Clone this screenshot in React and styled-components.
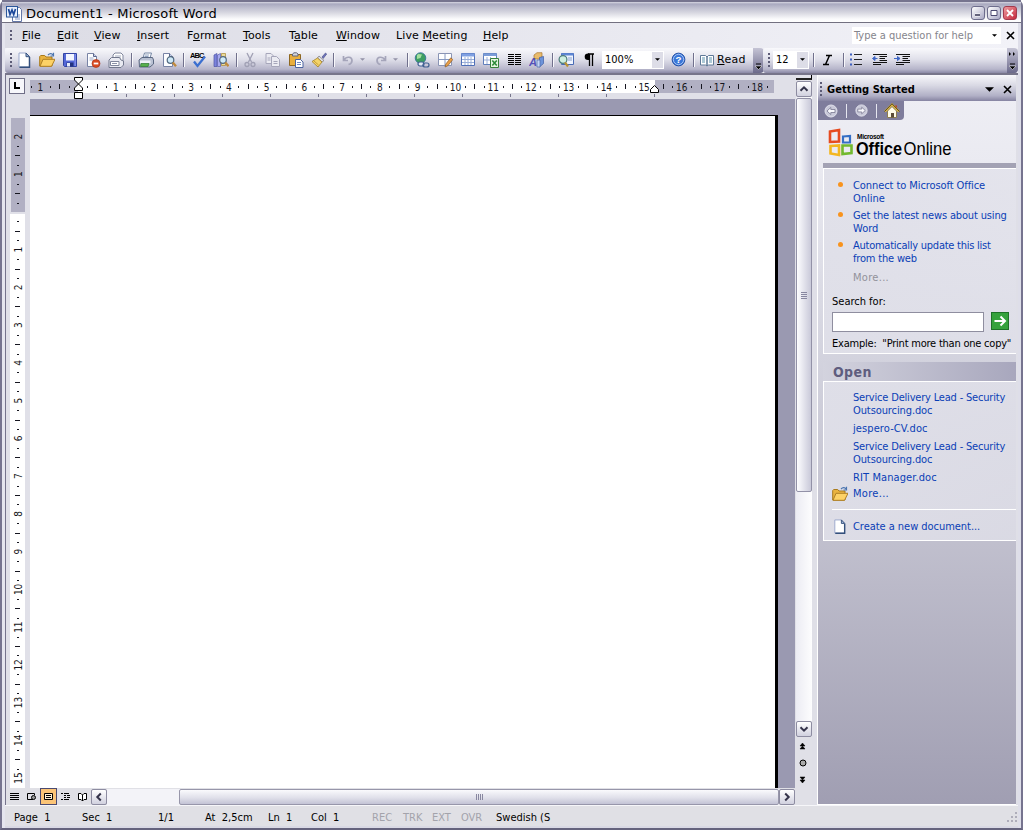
import React from "react";
import styled, { createGlobalStyle } from "styled-components";

const Global = createGlobalStyle`
    * {
        box-sizing: border-box;
    }
    body {
        margin: 0;
        overflow: hidden;
        font-family: "DejaVu Sans Condensed", "DejaVu Sans", sans-serif;
        font-stretch: condensed;
        font-size: 11px;
        color: #000;
    }
    svg {
        display: block;
        flex-shrink: 0;
    }
    u {
        text-underline-offset: 1px;
    }
`;

const Window = styled.div`
    width: 1023px;
    height: 830px;
    display: flex;
    flex-direction: column;
    background: #dfdfe7;
    border-left: 2px solid #76748f;
    border-right: 2px solid #76748f;
    border-bottom: 2px solid #65637d;
    border-radius: 6px 6px 0 0;
`;

const TitleBar = styled.div`
    height: 23px;
    flex-shrink: 0;
    display: flex;
    align-items: center;
    padding: 3px 4px 0 4px;
    border-top: 2px solid #76748e;
    border-bottom: 1px solid #727080;
    background: linear-gradient(#d8d8e3 0, #a9a9bf 2px, #c0c0d0 6px, #d9d9e2 11px, #fafafc 17px, #fff 20px);
`;

const Title = styled.span`
    flex: 1;
    margin-left: 4px;
    padding-bottom: 1px;
    font-family: "DejaVu Sans", sans-serif;
    font-stretch: normal;
    font-size: 13px;
    line-height: 15px;
    letter-spacing: 0.22px;
    white-space: nowrap;
`;

const CaptionButton = styled.div`
    width: 14px;
    height: 14px;
    margin: 0 0 2px 2px;
    display: flex;
    align-items: center;
    justify-content: center;
    border: 1px solid ${(p) => (p.$close ? "#a33a4d" : "#6d6c8c")};
    border-radius: 3px;
    background: ${(p) =>
        p.$close
            ? "linear-gradient(135deg, #ef9da0, #c5283b)"
            : "linear-gradient(135deg, #fff, #a9a8c4)"};
`;

const Frame = styled.div`
    flex: 1;
    min-height: 0;
    display: flex;
    flex-direction: column;
    border-left: 3px solid #e5e5ee;
    border-right: 3px solid #dedee9;
`;

const MenuBar = styled.div`
    height: 25px;
    flex-shrink: 0;
    display: flex;
    align-items: center;
    padding: 0 3px 0 5px;
    background: linear-gradient(90deg, #dcdce5, #f2f2f8);
`;

const Grip = styled.div`
    width: 2px;
    height: ${(p) => p.$h || 12}px;
    flex-shrink: 0;
    margin-right: ${(p) => p.$r || 0}px;
    background: repeating-linear-gradient(#5c5b76 0 2px, transparent 2px 4px);
`;

const MenuItem = styled.span`
    width: ${(p) => p.$w}px;
    font-family: "DejaVu Sans", sans-serif;
    font-stretch: normal;
    font-size: 11px;
    letter-spacing: 0.1px;
    white-space: nowrap;
`;

const Question = styled.div`
    width: 149px;
    height: 17px;
    margin: 0 5px 1px auto;
    display: flex;
    align-items: center;
    justify-content: space-between;
    padding: 0 4px 0 2px;
    background: #fff;
    color: #85858c;
    white-space: nowrap;
`;

const ToolBars = styled.div`
    height: 25px;
    flex-shrink: 0;
    display: flex;
    background: #f0f0f6;
`;

const ToolBar = styled.div`
    flex: ${(p) => (p.$grow ? 1 : "none")};
    width: ${(p) => p.$w}px;
    margin-left: ${(p) => p.$l || 0}px;
    display: flex;
    align-items: center;
    gap: 7px;
    padding: 0 0 2px 5px;
    border-radius: 3px 4px 4px 3px;
    background: linear-gradient(#f9f9fc, #e0e0ea 45%, #b6b5ca 85%, #8a88a5);
`;

const Sep = styled.div`
    width: 2px;
    height: 14px;
    flex-shrink: 0;
    margin: 0 ${(p) => p.$r ?? -2}px 0 ${(p) => p.$l || 0}px;
    border-left: 1px solid #70708c;
    border-right: 1px solid #f8f8fb;
`;

const SplitIcon = styled.div`
    flex-shrink: 0;
    display: flex;
    align-items: center;
    gap: 4px;
    margin-right: 1px;
`;

const Combo = styled.div`
    width: ${(p) => p.$w}px;
    height: 18px;
    margin-left: ${(p) => p.$l || 0}px;
    flex-shrink: 0;
    display: flex;
    justify-content: space-between;
    align-items: center;
    padding-left: 3px;
    background: #fff;
`;

const ComboButton = styled.span`
    width: 11px;
    height: 16px;
    margin-right: 1px;
    display: flex;
    align-items: center;
    justify-content: center;
    background: #dddde7;
`;

const ReadLabel = styled.span`
    margin-left: -5px;
    font-family: "DejaVu Sans", sans-serif;
    font-stretch: normal;
    font-size: 11px;
    letter-spacing: 0.3px;
`;

const OverflowCap = styled.div`
    width: 11px;
    height: 25px;
    flex-shrink: 0;
    margin: 0 0 -2px auto;
    display: flex;
    flex-direction: column;
    align-items: center;
    justify-content: space-between;
    padding: 4px 0 3px;
    border-radius: 0 4px 4px 0;
    background: linear-gradient(#c5c4d5, #6c6a8b);
`;

const Workspace = styled.div`
    flex: 1;
    min-height: 0;
    display: flex;
    border-top: 2px solid #77758a;
`;

const DocColumn = styled.div`
    width: 790px;
    flex-shrink: 0;
    display: flex;
    flex-direction: column;
    border-left: 1px solid #75738c;
`;

const RulerRow = styled.div`
    height: 24px;
    flex-shrink: 0;
    display: flex;
    background: #e0e0e8;
`;

const TabButton = styled.div`
    width: 16px;
    height: 16px;
    flex-shrink: 0;
    margin: 3px 5px 0 3px;
    display: flex;
    align-items: center;
    justify-content: center;
    border: 1px solid #6f6e86;
    background: #f7f7fb;
`;

const DocRow = styled.div`
    flex: 1;
    min-height: 0;
    display: flex;
    background: #e0e0e8;
`;

const VerticalRuler = styled.div`
    width: 24px;
    flex-shrink: 0;
`;

const Canvas = styled.div`
    flex: 1;
    padding-top: 16px;
    background: #9a99b1;
`;

const Page = styled.div`
    width: 748px;
    height: 100%;
    background: #fff;
    border-top: 1px solid #000;
    border-right: 3px solid #000;
`;

const BottomRow = styled.div`
    height: 17px;
    flex-shrink: 0;
    display: flex;
    align-items: center;
    background: #e0e0e6;
`;

const ViewButton = styled.div`
    width: 17px;
    height: 17px;
    display: flex;
    align-items: center;
    justify-content: center;
    border: 1px solid ${(p) => (p.$active ? "#4b4a70" : "transparent")};
    background: ${(p) => (p.$active ? "#fbc477" : "none")};
`;

const ScrollButton = styled.div`
    width: 16px;
    height: 16px;
    flex-shrink: 0;
    display: flex;
    align-items: center;
    justify-content: center;
    border: 1px solid #8d8ca1;
    border-radius: 2px;
    background: linear-gradient(#fff, #d1d1df);
`;

const HTrack = styled.div`
    flex: 1;
    display: flex;
    height: 16px;
    padding-left: 72px;
    background: #f3f3f8;
`;

const HThumb = styled.div`
    flex: 1;
    display: flex;
    align-items: center;
    justify-content: center;
    border: 1px solid #9796aa;
    border-radius: 2px;
    background: linear-gradient(#fafafd, #e0e0ea 55%, #c3c3d5);
`;

const VScroll = styled.div`
    width: 17px;
    flex-shrink: 0;
    display: flex;
    flex-direction: column;
    align-items: flex-end;
    background: #e0e0e7;
`;

const SplitBox = styled.div`
    width: 16px;
    height: 5px;
    margin-bottom: 1px;
    flex-shrink: 0;
    background: #e4e4ec;
    border-right: 1px solid #000;
    border-bottom: 2px solid #222;
`;

const VTrack = styled.div`
    width: 16px;
    height: 624px;
    padding-top: 1px;
    background: linear-gradient(90deg, #ececf3, #fdfdfe);
`;

const VThumb = styled.div`
    height: 394px;
    display: flex;
    align-items: center;
    justify-content: center;
    border: 1px solid #9291a7;
    border-radius: 2px;
    background: linear-gradient(90deg, #fdfdff, #e3e3ec 50%, #c9c9d9);
`;

const BrowseButtons = styled.div`
    width: 13px;
    flex: 1;
    display: flex;
    flex-direction: column;
    align-items: center;
    gap: 8px;
    padding-top: 5px;
    margin-right: 3px;
`;

const Pane = styled.div`
    flex: 1;
    margin: 0 2px 0 5px;
    display: flex;
    flex-direction: column;
    border-left: 1px solid #fff;
    border-bottom: 1px solid #fff;
    background: linear-gradient(#efeff5 0, #eaeaf1 90px, #d4d4df 270px, #c1c0ce 460px, #a09eb2 730px);
`;

const PaneHeader = styled.div`
    height: 26px;
    flex-shrink: 0;
    display: flex;
    align-items: center;
    padding: 2px 4px 0 2px;
    gap: 5px;
    font-weight: bold;
    background: linear-gradient(#f8f8fb, #d9d9e4 40%, #b1b0c6 80%, #8583a1);
`;

const PaneTitle = styled.span`
    flex: 1;
    letter-spacing: 0.05px;
    white-space: nowrap;
`;

const PaneButtons = styled.div`
    display: flex;
    align-items: center;
    gap: 9px;
`;

const PaneNav = styled.div`
    width: 86px;
    height: 19px;
    flex-shrink: 0;
    display: flex;
    align-items: center;
    gap: 7px;
    padding-left: 5px;
    border-radius: 0 0 4px 0;
    background: #7f7d9c;
`;

const NavSep = styled.div`
    width: 1px;
    height: 14px;
    background: #e6e6f0;
`;

const Brand = styled.div`
    height: 48px;
    flex-shrink: 0;
    margin-left: 5px;
    padding: 8px 0 0 4px;
    border-bottom: 5px solid #a3a2b4;
`;

const Section = styled.div`
    height: ${(p) => p.$h}px;
    flex-shrink: 0;
    margin-left: 5px;
    display: flex;
    flex-direction: column;
    padding: ${(p) => p.$pad || "0"};
    border: 1px solid #fff;
    border-right: none;
    background: linear-gradient(90deg, rgba(224, 224, 233, 0.9), rgba(226, 226, 235, 0.75));
`;

const SectionHead = styled.div`
    height: 19px;
    flex-shrink: 0;
    margin: 8px 0 0 5px;
    padding-left: 10px;
    font-weight: bold;
    font-size: 14px;
    line-height: 21px;
    letter-spacing: 0.4px;
    color: #5f5d7e;
    background: linear-gradient(90deg, #d3d3de, #a8a7bd);
`;

const Item = styled.div`
    height: ${(p) => p.$h || 30}px;
    flex-shrink: 0;
    display: flex;
    padding-left: ${(p) => (p.$bullet ? 13 : 8)}px;
`;

const Bullet = styled.span`
    width: 5px;
    height: 5px;
    margin: 3px 10px 0 1px;
    border-radius: 50%;
    background: #f8931d;
`;

const IconSlot = styled.span`
    width: 21px;
    flex-shrink: 0;
    margin-top: -1px;
`;

const Link = styled.span`
    color: ${(p) => (p.$muted ? "#92929b" : "#0a3eb6")};
    line-height: 13px;
    white-space: nowrap;
`;

const Line = styled.span`
    display: block;
    letter-spacing: ${(p) => p.$ls || 0}px;
`;

const PlainText = styled.div`
    padding-left: 8px;
    line-height: 13px;
    letter-spacing: ${(p) => p.$ls || 0}px;
    white-space: pre;
`;

const SearchRow = styled.div`
    height: 20px;
    display: flex;
    align-items: stretch;
    gap: 7px;
    margin: 4px 0 5px 8px;
`;

const SearchInput = styled.div`
    width: 152px;
    border: 1px solid #8f8e9f;
    background: #fff;
`;

const Divider = styled.div`
    height: 1px;
    flex-shrink: 0;
    margin: 9px 0 10px 8px;
    background: #fff;
`;

const StatusBar = styled.div`
    height: 23px;
    flex-shrink: 0;
    display: flex;
    align-items: center;
    padding: 2px 0 0 9px;
    border-top: 1px solid #f6f6f9;
    border-bottom: 2px solid #d9d9e4;
    background: #e0e0e5;
`;

const StatusItem = styled.span`
    width: ${(p) => p.$w}px;
    white-space: pre;
    color: ${(p) => (p.$off ? "#a3a3ab" : "#000")};
`;

const SizeGrip = styled.svg`
    margin-left: auto;
`;

const Arrow = ({ color = "#000", size = 5 }) => (
    <svg width={size} height={Math.ceil(size / 2)} viewBox="0 0 6 3">
        <path d="M0 0h6L3 3z" fill={color} />
    </svg>
);

const Cross = () => (
    <svg width="9" height="9" viewBox="0 0 9 9">
        <path d="M1 1l7 7M8 1L1 8" stroke="#000" strokeWidth="1.6" />
    </svg>
);

const Chevron = ({ turn = 0 }) => (
    <svg width="10" height="10" viewBox="0 0 10 10">
        <path
            d="M1.5 6.8L5 3.3l3.5 3.5"
            fill="none"
            stroke="#34334a"
            strokeWidth="2"
            transform={`rotate(${turn} 5 5)`}
        />
    </svg>
);

const MoreMark = () => (
    <svg width="7" height="7">
        <path d="M1 1h5" stroke="#000" />
        <path d="M0 3h7L3.500 6.500z" stroke="#fff" strokeWidth=".5" />
    </svg>
);

const paper = (x, y, w = 9, h = 12) => (
    <g>
        <path
            d={`M${x} ${y}h${w - 3}l3 3v${h - 3}h${-w}z`}
            fill="#fdfdff"
            stroke="#7883a5"
        />
        <path d={`M${x + w - 3} ${y}v3h3`} fill="#c7d0e8" stroke="#59658c" />
    </g>
);

const lens = (x, y) => (
    <g>
        <circle cx={x} cy={y} r="3.300" fill="#cfeaf8" stroke="#51687f" strokeWidth="1.200" />
        <path d={`M${x + 2.3} ${y + 2.6}l3.200 3.600`} stroke="#c08a3c" strokeWidth="2.300" />
    </g>
);

const icons = {
    word: (
        <g>
            <path d="M6.500 1.500h7l2 2v12h-9z" fill="#fff" stroke="#6477a8" />
            <path d="M9 9h5M9 11h5M9 13h5" stroke="#8596c4" />
            <rect x=".5" y=".5" width="11" height="10.500" fill="#e8effc" stroke="#2b579a" />
            <path d="M2.500 3l1.500 5.500L6 4l1.700 4.500L9.500 3" fill="none" stroke="#1c489a" strokeWidth="1.700" />
        </g>
    ),
    doc: (
        <g>
            <path d="M3 1h7l3.500 3.500V15H3z" fill="#fff" stroke="#9aa8cc" />
            <path d="M3.500 15.200h10V5" fill="none" stroke="#34507c" strokeWidth="1.500" />
            <path d="M10 1v3.700h3.500z" fill="#a7bce0" stroke="#34507c" />
        </g>
    ),
    folder: (
        <g>
            <path d="M.7 14V4.500l1-1h4l1.300 1.500h6V14z" fill="#e9b33f" stroke="#a97a1c" />
            <path d="M1 14.300l3-7h12l-3.500 7z" fill="#fdd266" stroke="#ae7f24" />
            <path d="M9 3c2-2.300 4-1.500 5 0M14.500.800V4H11.500" fill="none" stroke="#4b75b0" strokeWidth="1.200" />
        </g>
    ),
    save: (
        <g>
            <path d="M1.500 1.500h13v13h-12l-1-1z" fill="#5468d8" stroke="#3244a4" />
            <path d="M4 2h8v6.500H4z" fill="#f2f5ff" />
            <path d="M4.500 10.500h7V14.500h-7z" fill="#23337e" />
            <path d="M5 11h3v3.500H5z" fill="#e6ecfa" />
            <path d="M13.200 2v12" stroke="#8f9cf0" />
        </g>
    ),
    permission: (
        <g>
            {paper(2.5, 1.5, 9, 13)}
            <path d="M4.500 6h4M4.500 8h4" stroke="#9eabc9" />
            <circle cx="11" cy="11.500" r="4" fill="#d94a22" stroke="#a52d11" strokeWidth=".6" />
            <path d="M8.700 11.500h4.600" stroke="#fff" strokeWidth="1.800" />
        </g>
    ),
    mail: (
        <g>
            <path d="M5 6V3l2-2h6l2 2v7" fill="#fff" stroke="#80869c" />
            <path d="M7 4h6M7 6h6" stroke="#a5acc0" />
            <path d="M1 8l2.500-2.500h8L13 8l2.500 1v4L13 15.500H1z" fill="#e9eaf2" stroke="#72788d" />
            <path d="M2.500 9.500h8.500v4H2.500z" fill="#fff" stroke="#80869c" />
            <path d="M4 11.500h5" stroke="#8b92a8" />
        </g>
    ),
    print: (
        <g>
            <path d="M5 6l1.500-5h7L12 6" fill="#fff" stroke="#7486a4" />
            <path d="M1 8l3-2.500h10.500L15.500 8v4L12 15H1.500z" fill="#b9c1d3" stroke="#5a6781" />
            <path d="M2 8.500h10.500v3H2z" fill="#eef1f7" />
            <path d="M3 11.500h8l-1 3H2.500z" fill="#57b04b" stroke="#2f7a30" strokeWidth=".7" />
            <path d="M7 3h4M6.500 4.500h4" stroke="#90a2c0" />
        </g>
    ),
    preview: (
        <g>
            {paper(2.5, 1.5, 9, 13)}
            {lens(9.5, 8)}
        </g>
    ),
    spell: (
        <g>
            <text x="0" y="5.500" fontSize="7.500" fontWeight="bold" fontFamily="Liberation Sans" textLength="14.500">ABC</text>
            <path d="M4 9.500l3.500 4.500L15 4.500" fill="none" stroke="#3b6fd0" strokeWidth="2.300" />
        </g>
    ),
    research: (
        <g>
            <path d="M1 3l3-1.500v13H1z" fill="#7b83dc" stroke="#4d53a5" strokeWidth=".7" />
            <path d="M4.500 3l3-1.500v13h-3z" fill="#a8aaf0" stroke="#5a5eae" strokeWidth=".7" />
            <path d="M8.500 1.500h4v12h-4z" fill="#eadb9c" stroke="#a9862f" strokeWidth=".7" />
            {lens(10, 8)}
        </g>
    ),
    cut: (
        <g fill="none" stroke="#a0a0b4" strokeWidth="1.300">
            <path d="M5 1l4.500 9M11 1L6.500 10" />
            <circle cx="5" cy="12.500" r="2" />
            <circle cx="11" cy="12.500" r="2" />
        </g>
    ),
    copy: (
        <g fill="#ebebf2" stroke="#a6a6ba">
            <path d="M1 1.500h5l3 3v7H1z" />
            <path d="M6.500 4.500h5l3 3v7h-8z" />
            <path d="M8.500 9.500h4M8.500 11.500h4M2.500 6h3M2.500 8h3" />
        </g>
    ),
    paste: (
        <g>
            <path d="M1.500 2.500h11v11h-11z" fill="#e9ae3c" stroke="#8e6720" />
            <path d="M4.500 4V2L6 .800h2.500L10 2v2z" fill="#d5d7df" stroke="#636579" />
            <path d="M7.500 7.500h5l2.500 2.500v5.500H7.500z" fill="#fff" stroke="#4c64a0" />
            <path d="M9 10.500h4M9 12.500h4" stroke="#718bc5" />
        </g>
    ),
    brush: (
        <g>
            <path d="M11 5l3.500-4 1.200 1-3.500 4.500z" fill="#6c72ba" stroke="#454a83" strokeWidth=".6" />
            <path d="M8 4l5 4.500-2 1.500L6.500 6z" fill="#dcdde6" stroke="#666" strokeWidth=".6" />
            <path d="M6.500 6L11 10l-4 5L1 9.500z" fill="#f4d46a" stroke="#a27f24" strokeWidth=".8" />
            <path d="M3 9l4.500 4" stroke="#c89e36" />
        </g>
    ),
    undo: (
        <path d="M3.500 4v4.500H8M4 8c2.500-4 8-3.500 8 .500 0 2.500-1.500 3.500-3.500 4" fill="none" stroke="#a5a5ba" strokeWidth="1.700" />
    ),
    redo: (
        <path d="M12.500 4v4.500H8M12 8c-2.500-4-8-3.500-8 .500 0 2.500 1.500 3.500 3.500 4" fill="none" stroke="#a5a5ba" strokeWidth="1.700" />
    ),
    link: (
        <g>
            <circle cx="6.500" cy="6" r="5.300" fill="#3d9e62" stroke="#346c9c" strokeWidth=".8" />
            <path d="M3 3c2-2 3 0 5-.500L6.500 6 3 7z" fill="#a5e0a0" />
            <rect x="4" y="10" width="6" height="4" rx="2" fill="#e4eaf6" stroke="#405f91" strokeWidth="1.200" />
            <rect x="9" y="11" width="6" height="4" rx="2" fill="none" stroke="#405f91" strokeWidth="1.200" />
        </g>
    ),
    tables: (
        <g>
            <path d="M1.500 1.500h13v12h-13z" fill="#fff" stroke="#8a94b4" />
            <path d="M8 1.500v12M1.500 7.500h13" stroke="#8698c0" />
            <path d="M8 15l.800-3 5-6.200 2 1.800-5 6.200z" fill="#ea9e45" stroke="#8a5b28" strokeWidth=".7" />
        </g>
    ),
    table: (
        <g>
            <path d="M1.500 1.500h13v12h-13z" fill="#fff" stroke="#5070b8" />
            <path d="M1.500 1.500h13v3h-13z" fill="#7fa0e2" />
            <path d="M5 5v8M8 5v8M11 5v8M2 7.500h12M2 10.500h12" stroke="#9aafd9" />
        </g>
    ),
    excel: (
        <g>
            <path d="M.500 1.500h13v11H.500z" fill="#fff" stroke="#5f7ebb" />
            <path d="M.500 1.500h13v2.500h-13z" fill="#7b9cd8" />
            <path d="M4 5v7M7.500 5v7M1 8h12" stroke="#9aafd9" />
            <path d="M7.500 6.500h8v9h-8z" fill="#e6f6e2" stroke="#37813a" />
            <path d="M9.300 8.500l4.500 5M13.800 8.500l-4.500 5" stroke="#2c8b38" strokeWidth="1.600" />
        </g>
    ),
    columns: (
        <path d="M2 2.500h6M2 4.500h6M2 6.500h6M2 8.500h6M2 10.500h6M2 12.500h6M9 2.500h6M9 4.500h6M9 6.500h6M9 8.500h6M9 10.500h6M9 12.500h6" stroke="#000" />
    ),
    drawing: (
        <g>
            <path d="M5 3l3-2.300h5V5L10 7H5z" fill="#e9bb6b" stroke="#a87731" strokeWidth=".7" />
            <path d="M10.500 5.500l4-1v7l-4 3.500z" fill="#6d94da" stroke="#3d5da4" strokeWidth=".7" />
            <path d="M8 8h3v7H8z" fill="#c5d5f5" stroke="#4b68a9" strokeWidth=".7" />
            <text x="0" y="14" fontSize="11" fontWeight="bold" fontStyle="italic" fontFamily="Liberation Sans" fill="#5350b8">A</text>
        </g>
    ),
    map: (
        <g>
            <path d="M3.500 1.500h12v11h-12z" fill="#eef4ff" stroke="#486bb5" />
            <path d="M3.500 1.200h12v2.300h-12z" fill="#5e86d4" />
            <path d="M10 6h4M10 8h4" stroke="#89a0cc" />
            <circle cx="5" cy="7.500" r="3.900" fill="#ceefe0" stroke="#4b7b79" strokeWidth="1.200" />
            <path d="M7 10.500l3 4" stroke="#ba9335" strokeWidth="2.200" />
        </g>
    ),
    pilcrow: (
        <g>
            <path d="M7 2h6M8.500 2v12M11.500 2v12" stroke="#000" strokeWidth="1.300" />
            <path d="M8 1.500H7a3.300 3.300 0 0 0 0 6.600h1z" />
        </g>
    ),
    help: (
        <g>
            <circle cx="8" cy="8" r="6.800" fill="#3a76d8" stroke="#1f4ca3" />
            <circle cx="8" cy="8" r="5.500" fill="none" stroke="#a9c8f6" />
            <text x="8" y="11.800" fontSize="10.500" fontWeight="bold" fontFamily="Liberation Sans" fill="#fff" textAnchor="middle">?</text>
        </g>
    ),
    read: (
        <g>
            <path d="M1.500 3.500h5L8 5v9l-1.500-1h-5zM14.500 3.500h-5L8 5v9l1.500-1h5z" fill="#fff" stroke="#5f7a98" />
            <path d="M3 6h3M3 8h3M3 10h3M10 6h3M10 8h3M10 10h3" stroke="#5b93ad" />
        </g>
    ),
    italic: (
        <path d="M6 3.500h6M3 12.500h6M9.500 3.500L5.500 12.500" stroke="#000" strokeWidth="1.500" />
    ),
    bullets: (
        <g>
            <path d="M6 2.500h8M6 7.500h8M6 12.500h8" stroke="#222" />
            <path d="M2 1.500h2v2H2zM2 6.500h2v2H2zM2 11.500h2v2H2z" fill="#3d5fc0" />
        </g>
    ),
    outdent: (
        <g>
            <path d="M2 2.500h14M8.500 4.500h7.500M8.500 6.500h5.500M8.500 8.500h7.500M2 10.500h14M2 12.500h8" stroke="#111" />
            <path d="M6.500 6.500H2M4 4.500L1.500 6.500 4 8.500z" fill="#4067c5" stroke="#4067c5" />
        </g>
    ),
    indent: (
        <g>
            <path d="M2 2.500h14M8.500 4.500h7.500M8.500 6.500h5.500M8.500 8.500h7.500M2 10.500h14M2 12.500h8" stroke="#111" />
            <path d="M0 6.500h4M3.500 4.500L6 6.500 3.500 8.500z" fill="#4067c5" stroke="#4067c5" />
        </g>
    ),
    back: (
        <g>
            <circle cx="8" cy="8" r="6" fill="#c9c9d9" stroke="#e1e1ec" />
            <path d="M4 8l3.800-3.500v2H12v3H7.800v2z" fill="#f8f8fc" stroke="#77768f" strokeWidth=".8" />
        </g>
    ),
    forward: (
        <g>
            <circle cx="8" cy="8" r="6" fill="#c9c9d9" stroke="#e1e1ec" />
            <path d="M12 8L8.200 4.500v2H4v3h4.200v2z" fill="#f8f8fc" stroke="#77768f" strokeWidth=".8" />
        </g>
    ),
    home: (
        <g>
            <path d="M11 2.500h2V6h-2z" fill="#b74331" />
            <path d="M3.500 8L8 3.500 12.500 8v6.500h-9z" fill="#fffbe8" stroke="#8c7d51" />
            <path d="M1 8.500L8 1.500l7 7" fill="none" stroke="#e0b53a" strokeWidth="2" />
            <path d="M.500 8.500L8 .800l7.500 7.700" fill="none" stroke="#33301c" strokeWidth=".8" />
            <path d="M7 10h3v4.500H7z" fill="#5b4c37" />
        </g>
    ),
    viewNormal: <path d="M3 4.500h9M3 6.500h9M3 8.500h9M3 10.500h9" stroke="#000" />,
    viewWeb: (
        <g fill="none" stroke="#000">
            <path d="M9 10.500H3.500v-6h7V6" />
            <circle cx="9.500" cy="8.500" r="2" fill="#999" />
        </g>
    ),
    viewPrint: (
        <g fill="none" stroke="#000">
            <path d="M3.500 4.500h8v6h-8z" fill="#fff0d4" />
            <path d="M5 6.500h5M5 8.500h5" />
        </g>
    ),
    viewOutline: <path d="M3 4.500h2M6 4.500h5M6 6.500h2M9 6.500h3M6 8.500h2M9 8.500h3M3 10.500h2M6 10.500h5" stroke="#000" />,
    viewRead: <path d="M3.500 4.500H6L7.500 6 9 4.500h2.500v6H9L7.500 12 6 10.500H3.500zM7.500 6v6" fill="#fff" stroke="#000" />,
    go: (
        <g>
            <rect x=".5" y=".5" width="17" height="17" fill="#35a23c" stroke="#1e7228" />
            <path d="M3.500 9H14M9.500 4.500L14 9l-4.500 4.500" fill="none" stroke="#fff" strokeWidth="2" />
        </g>
    ),
};

const Icon = ({ name, size = 16, box = 16 }) => (
    <svg width={size} height={size} viewBox={`0 0 ${box} ${box}`}>
        {icons[name]}
    </svg>
);

const CM = 37.74;

const Marks = ({ from, to, flip }) => {
    const marks = [];
    for (let q = from; q <= to; q++) {
        const at = q * (CM / 4);
        if (q === 0) continue;
        if (q % 4 === 0) {
            marks.push(
                <text
                    key={q}
                    transform={`translate(${at} 3.700)${flip ? " scale(-1 1)" : ""}`}
                    fontSize="10"
                    textAnchor="middle"
                >
                    {Math.abs(q / 4)}
                </text>
            );
        } else {
            const h = q % 2 === 0 ? 5 : 2;
            marks.push(
                <rect key={q} x={Math.round(at)} y={-Math.ceil(h / 2)} width="1" height={h} />
            );
        }
    }
    return <g fill="#161620">{marks}</g>;
};

const HorizontalRuler = () => (
    <svg width="765" height="24" viewBox="30 75 765 24">
        <rect x="30" y="80" width="48" height="13" fill="#b1b0c3" />
        <rect x="78" y="80" width="577" height="13" fill="#fff" />
        <rect x="655" y="80" width="119" height="13" fill="#b1b0c3" />
        <g transform="translate(78 87)">
            <Marks from={-5} to={73} />
        </g>
        {Array.from({ length: 12 }, (_, i) => (
            <rect key={i} x={126 + i * 48} y="94" width="1" height="3" fill="#77768c" />
        ))}
        <path d="M74.500 77.500h8v2.500l-8 8v2.500h8v-2.500l-8-8z" fill="#fff" stroke="#000" />
        <path d="M74.500 92.500h8v6h-8z" fill="#fff" stroke="#000" />
        <path d="M650.500 92.500v-3l4-4 4 4v3z" fill="#fff" stroke="#000" />
    </svg>
);

const SideRuler = () => (
    <svg width="24" height="689" viewBox="6 99 24 689">
        <rect x="11" y="118" width="14" height="94" fill="#b1b0c3" />
        <rect x="10" y="214" width="15" height="574" fill="#fff" />
        <g transform="translate(18 212) rotate(-90) scale(-1 1)">
            <Marks from={-8} to={60} flip />
        </g>
    </svg>
);

const OfficeLogo = () => (
    <svg width="130" height="33" viewBox="0 0 130 33">
        <g fill="none" strokeWidth="2.600">
            <path d="M3 3.500l9-1.500v11.500l-9 .5z" stroke="#e64b20" />
            <path d="M16 8.500l7-.5v6.500h-7z" stroke="#356fc5" strokeWidth="2.200" />
            <path d="M3.500 18l8.500-.5V27l-8.500-1.500z" stroke="#f3b61f" />
            <path d="M15.500 17.500h9v7.500l-9 1z" stroke="#72b92e" />
        </g>
        <text x="30" y="11" fontSize="6.500" fontFamily="Liberation Sans" fontWeight="bold" textLength="27">Microsoft</text>
        <text x="29" y="27" fontSize="19" fontFamily="Liberation Sans" fontWeight="bold" textLength="46" lengthAdjust="spacingAndGlyphs">Office</text>
        <text x="76.500" y="27" fontSize="19" fontFamily="Liberation Sans" textLength="48" lengthAdjust="spacingAndGlyphs">Online</text>
    </svg>
);

const menu = [
    [35, "", "F", "ile"],
    [37, "", "E", "dit"],
    [43, "", "V", "iew"],
    [50, "", "I", "nsert"],
    [56, "F", "o", "rmat"],
    [46, "", "T", "ools"],
    [47, "T", "a", "ble"],
    [60, "", "W", "indow"],
    [87, "Live ", "M", "eeting"],
    [40, "", "H", "elp"],
];

const status = [
    [68, "Page  1"],
    [76, "Sec  1"],
    [47, "1/1"],
    [63, "At  2,5cm"],
    [43, "Ln  1"],
    [61, "Col  1"],
    [31, "REC", true],
    [29, "TRK", true],
    [29, "EXT", true],
    [35, "OVR", true],
    [60, "Swedish (S"],
];

const App = () => {
    return (
        <>
            <Global />
            <Window>
                <TitleBar>
                    <Icon name="word" />
                    <Title>Document1 - Microsoft Word</Title>
                    <CaptionButton>
                        <svg width="8" height="8"><path d="M1 6h5" stroke="#fff" strokeWidth="3" /><path d="M1 6h5" stroke="#2f2e4f" strokeWidth="1.500" /></svg>
                    </CaptionButton>
                    <CaptionButton>
                        <svg width="8" height="8"><path d="M1 1.500h6v5H1z" fill="#fff" stroke="#4c4a70" /></svg>
                    </CaptionButton>
                    <CaptionButton $close>
                        <svg width="8" height="8"><path d="M1 1l6 6M7 1L1 7" stroke="#fff" strokeWidth="1.800" /></svg>
                    </CaptionButton>
                </TitleBar>
                <Frame>
                    <MenuBar>
                        <Grip $r={10} />
                        {menu.map(([w, pre, key, rest]) => (
                            <MenuItem key={pre + key + rest} $w={w}>
                                {pre}<u>{key}</u>{rest}
                            </MenuItem>
                        ))}
                        <Question>
                            Type a question for help
                            <Arrow />
                        </Question>
                        <Cross />
                    </MenuBar>
                    <ToolBars>
                        <ToolBar $w={757}>
                            <Grip $h={14} $r={-3} />
                            <Icon name="doc" />
                            <Icon name="folder" />
                            <Icon name="save" />
                            <Icon name="permission" />
                            <Icon name="mail" />
                            <Sep />
                            <Icon name="print" />
                            <Icon name="preview" />
                            <Sep $l={-1} />
                            <Icon name="spell" />
                            <Icon name="research" />
                            <Sep $r={-3} />
                            <Icon name="cut" />
                            <Icon name="copy" />
                            <Icon name="paste" />
                            <Icon name="brush" />
                            <Sep $l={-1} />
                            <SplitIcon>
                                <Icon name="undo" />
                                <Arrow color="#9392a7" />
                            </SplitIcon>
                            <SplitIcon>
                                <Icon name="redo" />
                                <Arrow color="#9392a7" />
                            </SplitIcon>
                            <Sep $l={1} />
                            <Icon name="link" />
                            <Icon name="tables" />
                            <Icon name="table" />
                            <Icon name="excel" />
                            <Icon name="columns" />
                            <Icon name="drawing" />
                            <Sep $r={-3} />
                            <Icon name="map" />
                            <Icon name="pilcrow" />
                            <Combo $w={62} $l={-2}>
                                100%
                                <ComboButton><Arrow /></ComboButton>
                            </Combo>
                            <Icon name="help" size={15} />
                            <Sep $r={-3} />
                            <Icon name="read" />
                            <ReadLabel><u>R</u>ead</ReadLabel>
                            <OverflowCap>
                                <i />
                                <MoreMark />
                            </OverflowCap>
                        </ToolBar>
                        <ToolBar $grow $l={1}>
                            <Grip $h={14} />
                            <Combo $w={36} $l={-4}>
                                12
                                <ComboButton><Arrow /></ComboButton>
                            </Combo>
                            <Sep $l={-3} />
                            <Icon name="italic" />
                            <Sep $r={-4} />
                            <Icon name="bullets" />
                            <Icon name="outdent" />
                            <Icon name="indent" />
                            <OverflowCap>
                                <svg width="8" height="4"><path d="M0 0l2 2-2 2zM4 0l2 2-2 2z" /></svg>
                                <MoreMark />
                            </OverflowCap>
                        </ToolBar>
                    </ToolBars>
                    <Workspace>
                        <DocColumn>
                            <RulerRow>
                                <TabButton>
                                    <svg width="8" height="8"><path d="M2 0v6h5" fill="none" stroke="#000" strokeWidth="2" /></svg>
                                </TabButton>
                                <HorizontalRuler />
                            </RulerRow>
                            <DocRow>
                                <VerticalRuler><SideRuler /></VerticalRuler>
                                <Canvas><Page /></Canvas>
                            </DocRow>
                            <BottomRow>
                                <ViewButton><Icon name="viewNormal" /></ViewButton>
                                <ViewButton><Icon name="viewWeb" /></ViewButton>
                                <ViewButton $active><Icon name="viewPrint" size={15} box={15} /></ViewButton>
                                <ViewButton><Icon name="viewOutline" /></ViewButton>
                                <ViewButton><Icon name="viewRead" /></ViewButton>
                                <ScrollButton><Chevron turn={-90} /></ScrollButton>
                                <HTrack>
                                    <HThumb>
                                        <svg width="7" height="6"><path d="M.500 0v6M2.500 0v6M4.500 0v6M6.500 0v6" stroke="#8887a0" /></svg>
                                    </HThumb>
                                </HTrack>
                                <ScrollButton><Chevron turn={90} /></ScrollButton>
                            </BottomRow>
                        </DocColumn>
                        <VScroll>
                            <SplitBox />
                            <ScrollButton><Chevron /></ScrollButton>
                            <VTrack>
                                <VThumb>
                                    <svg width="6" height="7"><path d="M0 .500h6M0 2.500h6M0 4.500h6M0 6.500h6" stroke="#8887a0" /></svg>
                                </VThumb>
                            </VTrack>
                            <ScrollButton><Chevron turn={180} /></ScrollButton>
                            <BrowseButtons>
                                <svg width="7" height="9"><path d="M3.500 1L6 4H1zM3.500 4L6 7H1z" stroke="#000" strokeWidth=".5" /></svg>
                                <svg width="8" height="8"><circle cx="4" cy="4" r="3" fill="#aaa" stroke="#000" /></svg>
                                <svg width="7" height="9"><path d="M3.500 5L6 2H1zM3.500 8L6 5H1z" stroke="#000" strokeWidth=".5" /></svg>
                            </BrowseButtons>
                        </VScroll>
                        <Pane>
                            <PaneHeader>
                                <Grip $h={14} />
                                <PaneTitle>Getting Started</PaneTitle>
                                <PaneButtons>
                                    <Arrow size={9} />
                                    <Cross />
                                </PaneButtons>
                            </PaneHeader>
                            <PaneNav>
                                <Icon name="back" />
                                <NavSep />
                                <Icon name="forward" size={15} />
                                <NavSep />
                                <Icon name="home" />
                            </PaneNav>
                            <Brand><OfficeLogo /></Brand>
                            <Section $h={186} $pad="10px 0 0">
                                <Item $bullet>
                                    <Bullet />
                                    <Link>
                                        <Line $ls={-0.08}>Connect to Microsoft Office</Line>
                                        <Line>Online</Line>
                                    </Link>
                                </Item>
                                <Item $bullet>
                                    <Bullet />
                                    <Link>
                                        <Line $ls={-0.15}>Get the latest news about using</Line>
                                        <Line>Word</Line>
                                    </Link>
                                </Item>
                                <Item $bullet $h={32}>
                                    <Bullet />
                                    <Link>
                                        <Line $ls={-0.25}>Automatically update this list</Line>
                                        <Line $ls={-0.18}>from the web</Line>
                                    </Link>
                                </Item>
                                <Item $h={24}>
                                    <IconSlot />
                                    <Link $muted><Line $ls={0.3}>More...</Line></Link>
                                </Item>
                                <PlainText>Search for:</PlainText>
                                <SearchRow>
                                    <SearchInput />
                                    <Icon name="go" size={18} box={18} />
                                </SearchRow>
                                <PlainText $ls={-0.22}>Example:  "Print more than one copy"</PlainText>
                            </Section>
                            <SectionHead>Open</SectionHead>
                            <Section $h={160} $pad="9px 0 0">
                                <Item $h={31}>
                                    <IconSlot />
                                    <Link>
                                        <Line $ls={-0.19}>Service Delivery Lead - Security</Line>
                                        <Line $ls={-0.1}>Outsourcing.doc</Line>
                                    </Link>
                                </Item>
                                <Item $h={18}>
                                    <IconSlot />
                                    <Link><Line $ls={0.1}>jespero-CV.doc</Line></Link>
                                </Item>
                                <Item $h={31}>
                                    <IconSlot />
                                    <Link>
                                        <Line $ls={-0.19}>Service Delivery Lead - Security</Line>
                                        <Line $ls={-0.1}>Outsourcing.doc</Line>
                                    </Link>
                                </Item>
                                <Item $h={16}>
                                    <IconSlot />
                                    <Link><Line $ls={0.1}>RIT Manager.doc</Line></Link>
                                </Item>
                                <Item $h={13}>
                                    <IconSlot><Icon name="folder" /></IconSlot>
                                    <Link><Line $ls={0.3}>More...</Line></Link>
                                </Item>
                                <Divider />
                                <Item $h={14}>
                                    <IconSlot><Icon name="doc" size={15} /></IconSlot>
                                    <Link><Line $ls={-0.04}>Create a new document...</Line></Link>
                                </Item>
                            </Section>
                        </Pane>
                    </Workspace>
                    <StatusBar>
                        {status.map(([w, text, off]) => (
                            <StatusItem key={text} $w={w} $off={off}>{text}</StatusItem>
                        ))}
                        <SizeGrip width="12" height="12" viewBox="0 0 12 12">
                            <path d="M9 1h2v2H9zM9 5h2v2H9zM5 5h2v2H5zM9 9h2v2H9zM5 9h2v2H5zM1 9h2v2H1z" fill="#aeadba" />
                        </SizeGrip>
                    </StatusBar>
                </Frame>
            </Window>
        </>
    );
};

export default App;
